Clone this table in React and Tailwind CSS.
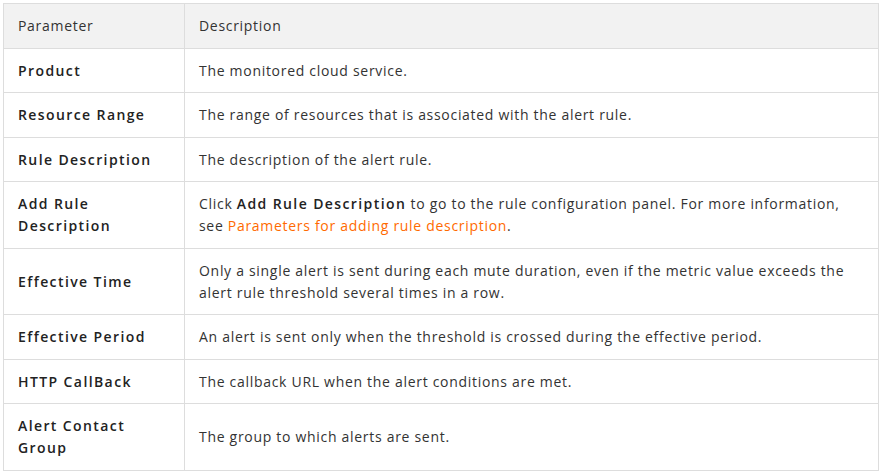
const rows = [
  { name: "Product", desc: "The monitored cloud service." },
  { name: "Resource Range", desc: "The range of resources that is associated with the alert rule." },
  { name: "Rule Description", desc: "The description of the alert rule." },
  {
    name: "Add Rule Description",
    desc: (
      <>
        Click <b className="font-semibold text-[#222] tracking-[0.1em]">Add Rule Description</b> to go to the rule configuration panel. For more information, see{" "}
        <a className="text-[#ff6a00]">Parameters for adding rule description</a>.
      </>
    ),
  },
  {
    name: "Effective Time",
    desc: "Only a single alert is sent during each mute duration, even if the metric value exceeds the alert rule threshold several times in a row.",
  },
  { name: "Effective Period", desc: "An alert is sent only when the threshold is crossed during the effective period." },
  { name: "HTTP CallBack", desc: "The callback URL when the alert conditions are met." },
  { name: "Alert Contact Group", desc: "The group to which alerts are sent." },
];

export default function App() {
  return (
    <div className="bg-white w-[883px] h-[473px] pt-[3px] pl-[3px] font-['Open_Sans',sans-serif] text-[14px] leading-[22px] tracking-[0.05em] text-[#333]">
      <table className="w-[876px] border-collapse table-fixed">
        <colgroup>
          <col className="w-[181px]" />
          <col />
        </colgroup>
        <thead>
          <tr className="bg-[#f2f2f2]">
            <th className="border border-[#dddddd] px-[14px] py-[10.875px] text-left font-normal">Parameter</th>
            <th className="border border-[#dddddd] px-[14px] py-[10.875px] text-left font-normal">Description</th>
          </tr>
        </thead>
        <tbody>
          {rows.map((r) => (
            <tr key={r.name}>
              <td className="border border-[#dddddd] px-[14px] py-[10.75px] font-semibold tracking-[0.1em] text-[#222] align-middle">{r.name}</td>
              <td className="border border-[#dddddd] px-[14px] py-[10.75px] align-middle">{r.desc}</td>
            </tr>
          ))}
        </tbody>
      </table>
    </div>
  );
}
